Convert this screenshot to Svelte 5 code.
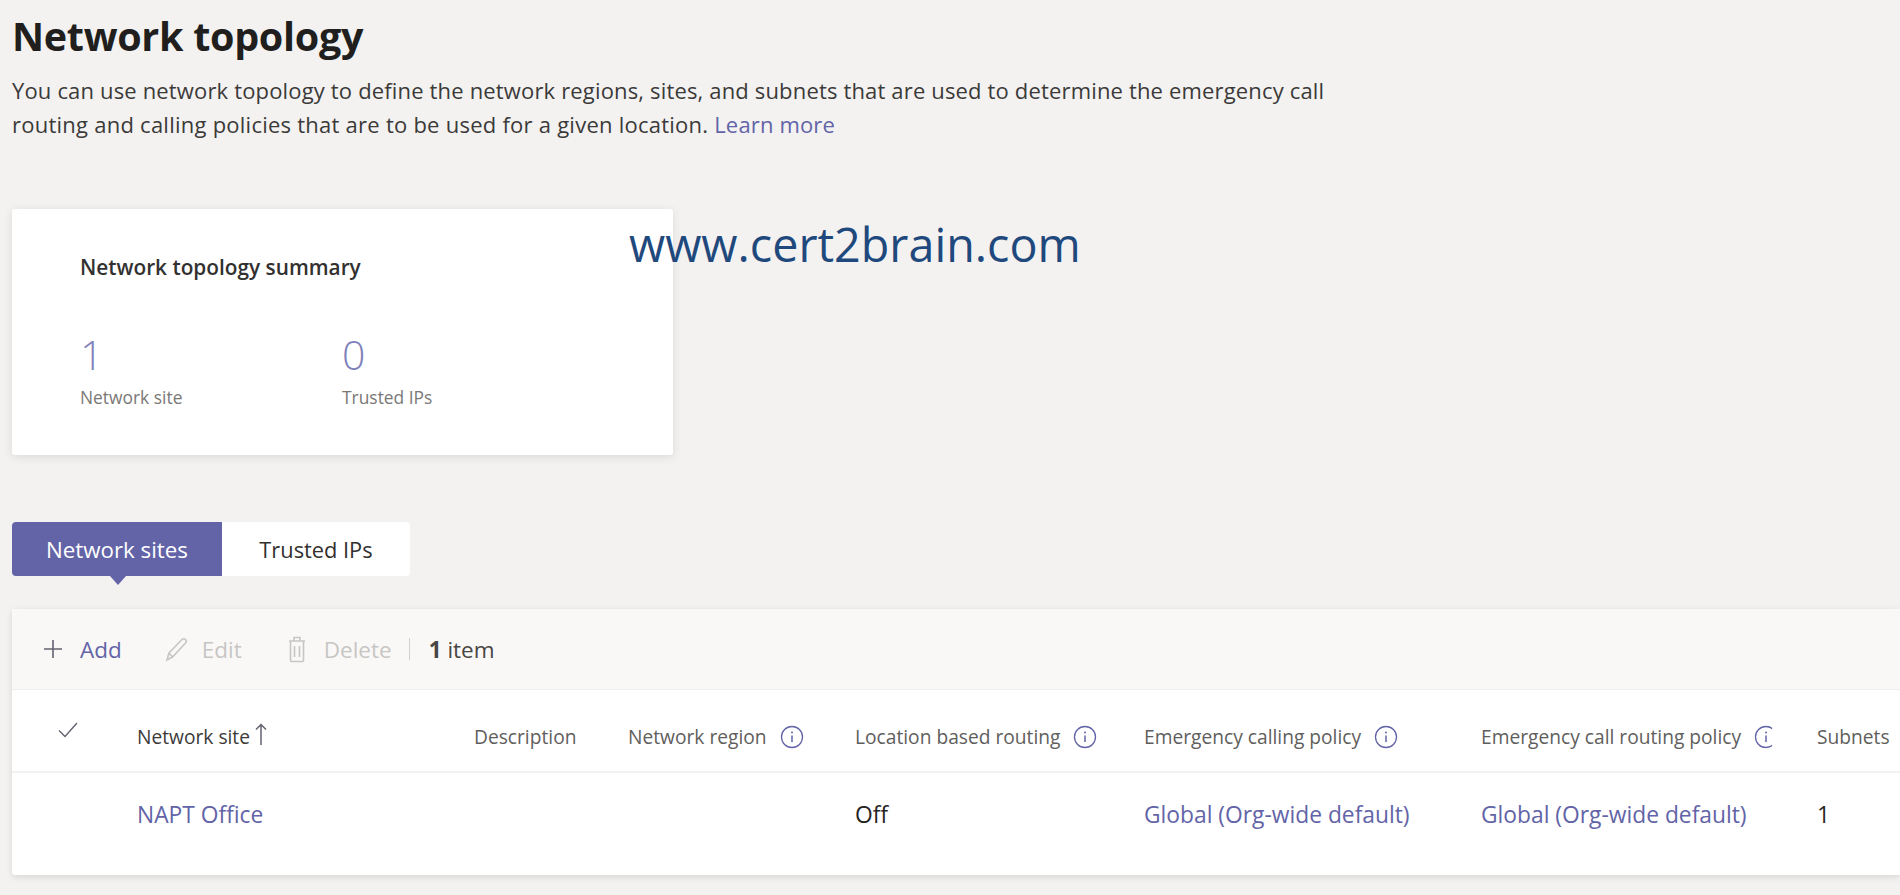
<script>
  const columns = [
    { label: 'Network region', info: true },
    { label: 'Location based routing', info: true },
    { label: 'Emergency calling policy', info: true },
    { label: 'Emergency call routing policy', info: true, clipped: true },
    { label: 'Subnets' }
  ];
</script>

<div class="page">
  <h1>Network topology</h1>
  <p class="intro">
    You can use network topology to define the network regions, sites, and subnets that are used to determine the emergency call<br />
    <span class="second">routing and calling policies that are to be used for a given location.</span> <a href="#top">Learn more</a>
  </p>

  <section class="summary">
    <h2>Network topology summary</h2>
    <div class="stats">
      <div class="stat">
        <span class="num">1</span>
        <span class="cap">Network site</span>
      </div>
      <div class="stat">
        <span class="num">0</span>
        <span class="cap">Trusted IPs</span>
      </div>
    </div>
  </section>

  <div class="tabs">
    <button class="tab active">Network sites</button>
    <button class="tab">Trusted IPs</button>
  </div>

  <section class="list">
    <div class="toolbar">
      <span class="action add">
        <svg width="22" height="22" viewBox="0 0 22 22"><path d="M11 2v18M2 11h18" stroke="#62636f" stroke-width="1.6" fill="none" /></svg>
        Add
      </span>
      <span class="action off edit">
        <svg width="26" height="26" viewBox="0 0 26 26" fill="none" stroke="#c8c6c4" stroke-width="1.6"><path d="M3 24l2-7L18 3.500c1-1 2.500-1 3.500 0s1 2.500 0 3.500L8.500 21z" /><path d="M5 17l3.500 4" /></svg>
        Edit
      </span>
      <span class="action off del">
        <svg width="20" height="28" viewBox="0 0 20 28" fill="none" stroke="#c8c6c4" stroke-width="1.6"><path d="M2 6h16M7 6V2.500h6V6M3.500 6v19a1.500 1.500 0 0 0 1.500 1.500h10a1.500 1.500 0 0 0 1.500-1.500V6M7.500 11v11M12.500 11v11" /></svg>
        Delete
      </span>
      <span class="sep"></span>
      <span class="count"><b>1</b> item</span>
    </div>

    <div class="row head">
      <span class="check">
        <svg width="20" height="16" viewBox="0 0 20 16"><path d="M1 8.500l6 6L19 1" stroke="#62636f" stroke-width="1.400" fill="none" /></svg>
      </span>
      <span class="cell">
        Network site
        <svg class="sort" width="12" height="22" viewBox="0 0 12 22"><path d="M6 22V2M1 6.500L6 1.500l5 5" stroke="#62636f" stroke-width="1.500" fill="none" /></svg>
      </span>
      <span class="cell">Description</span>
      {#each columns as col}
        <span class="cell">
          {col.label}
          {#if col.info}
            <svg class="info" class:clipped={col.clipped} width="24" height="24" viewBox="0 0 24 24" fill="none">
              <circle cx="12" cy="12" r="10.500" stroke="#6264a7" stroke-width="1.300" />
              <path d="M12 10.500v6.500" stroke="#6264a7" stroke-width="1.500" />
              <circle cx="12" cy="7.500" r="1" fill="#6264a7" />
            </svg>
          {/if}
        </span>
      {/each}
    </div>

    <div class="row body">
      <span class="check"></span>
      <a class="cell link" href="#top">NAPT Office</a>
      <span class="cell"></span>
      <span class="cell"></span>
      <span class="cell">Off</span>
      <a class="cell link" href="#top">Global (Org-wide default)</a>
      <a class="cell link" href="#top">Global (Org-wide default)</a>
      <span class="cell">1</span>
    </div>
  </section>

  <div class="watermark">www.cert2brain.com</div>
</div>

<style>
  :global(body) {
    background: #f3f2f1;
    overflow: hidden;
  }

  .page {
    position: relative;
    height: 895px;
    padding: 12px 0 0 12px;
    box-sizing: border-box;
    overflow: hidden;
    font-family: "Open Sans", "Noto Sans", sans-serif;
    color: #252423;
  }

  h1 {
    margin: 0;
    font-size: 39.500px;
    line-height: 48px;
    font-weight: 700;
    letter-spacing: -0.3px;
    color: #201f1e;
  }

  .intro {
    margin: 13px 0 0;
    font-size: 22px;
    letter-spacing: 0.16px;
    line-height: 34px;
    color: #3b3a39;
  }

  .second {
    letter-spacing: 0.245px;
  }

  .intro a {
    color: #6264a7;
    text-decoration: none;
  }

  .summary {
    width: 661px;
    height: 246px;
    margin-top: 68px;
    padding: 44px 0 0 68px;
    box-sizing: border-box;
    background: #fff;
    border-radius: 3px;
    box-shadow: 0 2px 10px rgba(0, 0, 0, 0.1);
  }

  h2 {
    margin: 0;
    font-size: 20.800px;
    line-height: 28px;
    font-weight: 600;
    color: #323130;
  }

  .stats {
    display: flex;
    margin-top: 47px;
  }

  .stat {
    width: 262px;
    display: flex;
    flex-direction: column;
  }

  .num {
    font-size: 41px;
    line-height: 52px;
    font-weight: 300;
    color: #7f81bb;
  }

  .cap {
    font-size: 17.400px;
    line-height: 26px;
    margin-top: 4px;
    color: #7a7876;
  }

  .tabs {
    display: flex;
    width: 398px;
    height: 54px;
    margin-top: 67px;
    background: #fff;
    border-radius: 4px;
  }

  .tab {
    position: relative;
    height: 54px;
    width: 188px;
    padding: 0;
    border: 0;
    background: none;
    font: inherit;
    font-size: 21.800px;
    color: #323130;
  }

  .tab.active {
    width: 210px;
    background: #6264a7;
    color: #fff;
    font-size: 22.300px;
    border-radius: 4px 0 0 4px;
  }

  .tab.active::after {
    content: '';
    position: absolute;
    left: 98px;
    bottom: -9px;
    width: 0;
    height: 0;
    border-left: 8px solid transparent;
    border-right: 8px solid transparent;
    border-top: 9px solid #6264a7;
  }

  .list {
    margin-top: 33px;
    background: #fff;
    border-radius: 3px 0 0 3px;
    box-shadow: 0 2px 6px rgba(0, 0, 0, 0.12);
  }

  .toolbar {
    display: flex;
    align-items: center;
    height: 81px;
    padding-left: 30px;
    background: #f9f8f7;
    border-bottom: 1px solid #f0efee;
    box-sizing: border-box;
    font-size: 22.500px;
  }

  .action {
    display: inline-flex;
    align-items: center;
    gap: 16px;
  }

  .add {
    color: #6264a7;
    margin-right: 42px;
  }

  .off {
    color: #c8c6c4;
  }

  .edit {
    gap: 12px;
    margin-right: 45px;
  }

  .del {
    gap: 17px;
  }

  .sep {
    width: 1px;
    height: 22px;
    margin: 0 19px 0 17px;
    background: #d2d0ce;
  }

  .count {
    color: #484644;
  }

  .row {
    display: grid;
    grid-template-columns: 125px 337px 154px 227px 289px 337px 336px 1fr;
    align-items: center;
  }

  .head {
    height: 83px;
    padding-top: 12px;
    border-bottom: 2px solid #f3f2f1;
    box-sizing: border-box;
    font-size: 19.200px;
    color: #605e5c;
  }

  .body {
    height: 102px;
    padding-bottom: 20px;
    box-sizing: border-box;
    font-size: 22.800px;
    color: #252423;
  }

  .check {
    padding-left: 46px;
    margin-top: -12px;
  }

  .cell {
    white-space: nowrap;
    display: flex;
    align-items: center;
    text-decoration: none;
  }

  .head .cell:nth-child(2) {
    color: #3b3a39;
  }

  .link {
    color: #6264a7;
  }

  .sort {
    margin: -6px 0 0 5px;
  }

  .info {
    margin-left: 13px;
  }

  /* last icon is cut off by the next column in the original */
  .clipped {
    clip-path: inset(0 6px 0 0);
  }

  .watermark {
    position: absolute;
    left: 629px;
    top: 214px;
    font-size: 46.700px;
    line-height: 60px;
    color: #1f497d;
  }
</style>
